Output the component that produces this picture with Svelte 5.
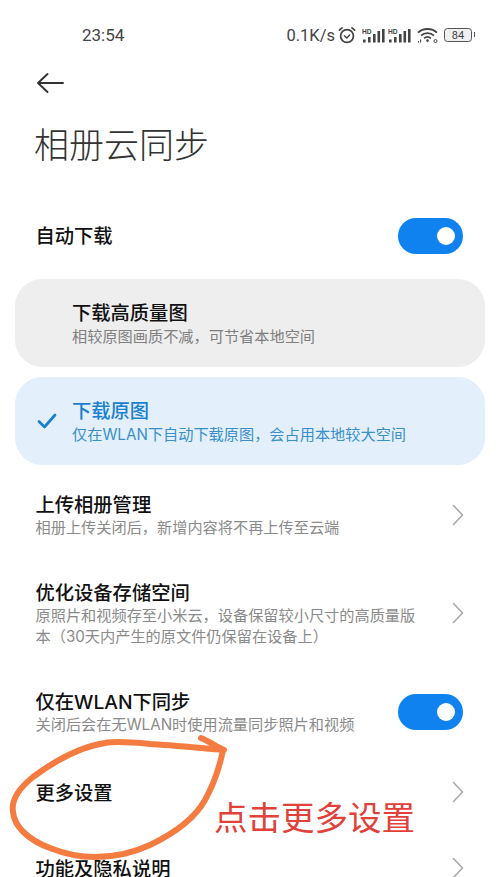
<script>
  const rows = [
    { title: '上传相册管理', sub: ['相册上传关闭后，新增内容将不再上传至云端'], kind: 'chevron' },
    { title: '优化设备存储空间', sub: ['原照片和视频存至小米云，设备保留较小尺寸的高质量版', '本（30天内产生的原文件仍保留在设备上）'], kind: 'chevron' },
    { title: '仅在WLAN下同步', sub: ['关闭后会在无WLAN时使用流量同步照片和视频'], kind: 'toggle' },
    { title: '更多设置', sub: [], kind: 'chevron', cls: 'more' },
    { title: '功能及隐私说明', sub: [], kind: 'chevron', cls: 'privacy' }
  ];
</script>

<div class="page">
  <header class="status">
    <span class="time">23:54</span>
    <div class="status-right">
      <span class="speed">0.1K/s</span>
      <svg class="alarm" width="20" height="20" viewBox="0 0 20 20" fill="none" stroke="#444" stroke-linecap="round" stroke-linejoin="round">
        <circle cx="10" cy="11" r="6.4" stroke-width="1.7"/>
        <path d="M7.4 10.8 9.8 13l2.8-3" stroke-width="1.5"/>
        <path d="M2.4 5.2 5 2.8M17.6 5.2 15 2.8" stroke-width="1.7"/>
      </svg>
      {#each [0, 1] as s}
        <svg class="signal" width="23" height="15" viewBox="0 0 23 15">
          <text x="0" y="5.6" font-size="6.6" font-weight="700" font-family="Liberation Sans" fill="#444">HD</text>
          <rect x="1" y="11.5" width="2.6" height="3" fill="#444"/>
          <rect x="6" y="9" width="2.6" height="5.5" fill="#444"/>
          <rect x="11" y="6" width="2.6" height="8.5" fill="#444"/>
          <rect x="15.5" y="3" width="2.6" height="11.5" fill="#444"/>
          <rect x="20" y="1" width="2.6" height="13.5" fill="#444"/>
        </svg>
      {/each}
      <svg class="wifi" width="21" height="16" viewBox="0 0 21 16" fill="none" stroke="#444" stroke-width="1.8">
        <path d="M1 5.6C6 .8 15 .8 20 5.6"/>
        <path d="M4 8.6C7.5 5.3 13.5 5.3 17 8.6"/>
        <path d="M7 11.4C9 9.7 12 9.7 14 11.4"/>
        <circle cx="10.5" cy="13.6" r="1.3" fill="#444" stroke="none"/>
        <path d="M1.5 15.6v-1.6M3.6 15.6v-3" stroke-width="1.1"/>
        <circle cx="18.5" cy="14" r="1.5" stroke-width="1"/>
      </svg>
      <div class="battery"><span>84</span></div>
    </div>
  </header>

  <nav class="nav">
    <svg width="28" height="22" viewBox="0 0 28 22" fill="none" stroke="#333" stroke-width="1.9" stroke-linecap="round" stroke-linejoin="round">
      <path d="M27 11H2M11.5 2 2 11l9.5 9"/>
    </svg>
  </nav>

  <h1>相册云同步</h1>

  <div class="auto">
    <span class="row-title">自动下载</span>
    <span class="toggle"><i></i></span>
  </div>

  <section class="cards">
    <div class="card">
      <div class="check-slot"></div>
      <div class="card-text">
        <div class="card-title">下载高质量图</div>
        <div class="sub">相较原图画质不减，可节省本地空间</div>
      </div>
    </div>
    <div class="card on">
      <div class="check-slot">
        <svg width="20" height="16" viewBox="0 0 20 16" fill="none" stroke="#1a80d0" stroke-width="2.8" stroke-linecap="round" stroke-linejoin="round">
          <path d="M2 8.5 7.5 14 18 2"/>
        </svg>
      </div>
      <div class="card-text">
        <div class="card-title">下载原图</div>
        <div class="sub">仅在WLAN下自动下载原图，会占用本地较大空间</div>
      </div>
    </div>
  </section>

  <section class="list">
    {#each rows as row}
      <div class="row {row.cls ?? ''}">
        <div class="row-text">
          <div class="row-title">{row.title}</div>
          {#each row.sub as line}
            <div class="sub">{line}</div>
          {/each}
        </div>
        {#if row.kind === 'toggle'}
          <span class="toggle row-toggle"><i></i></span>
        {:else}
          <svg class="chev" width="12" height="22" viewBox="0 0 12 22" fill="none" stroke="#a9a9a9" stroke-width="1.6" stroke-linecap="round" stroke-linejoin="round">
            <path d="M1.5 1.5 10.5 11l-9 9.5"/>
          </svg>
        {/if}
      </div>
    {/each}
  </section>

  <svg class="scribble" width="500" height="877" viewBox="0 0 500 877" fill="none" stroke="#f47c40" stroke-width="6" stroke-linecap="round" stroke-linejoin="round">
    <path d="M201 738C208 741 216 746 224 750C200 748 170 745 150 744C130 742 115 741 105 743C85 746 60 757 33 777C18 789 11 800 13 812C14 826 28 840 50 848C65 854 80 857 95 857C115 857 135 852 150 845C175 833 195 818 205 800C215 782 220 765 223 750"/>
  </svg>
  <div class="note">点击更多设置</div>
</div>

<style>
  :global(body) {
    margin: 0;
    background: #fff;
  }
  .page {
    position: relative;
    width: 500px;
    height: 877px;
    overflow: hidden;
    background: #fff;
    font-family: Inter, "Noto Sans CJK SC", "Noto Sans", sans-serif;
    color: #111;
  }
  .status {
    height: 70px;
    display: flex;
    align-items: center;
    justify-content: space-between;
    padding: 0 28px 0 82px;
    box-sizing: border-box;
    font-family: Roboto, "Liberation Sans", sans-serif;
    color: #444;
  }
  .time {
    font-size: 17px;
  }
  .status-right {
    display: flex;
    align-items: center;
  }
  .speed {
    font-size: 16.5px;
    margin-right: 2px;
  }
  .alarm {
    margin-right: 5px;
  }
  .signal {
    margin-right: 3px;
  }
  .wifi {
    margin: 0 6px 0 3px;
  }
  .battery {
    position: relative;
    width: 28px;
    height: 14px;
    border: 1.3px solid #555;
    border-radius: 3.5px;
    display: flex;
    align-items: center;
    justify-content: center;
    box-sizing: border-box;
    font-size: 11px;
    color: #444;
    background: #f0f0f0;
  }
  .battery::after {
    content: "";
    position: absolute;
    right: -4px;
    top: 3px;
    width: 1.5px;
    height: 5px;
    background: #555;
  }
  .nav {
    height: 26px;
    padding-left: 36px;
    display: flex;
    align-items: center;
  }
  h1 {
    margin: 27px 0 0 34px;
    font-size: 35px;
    line-height: 44px;
    font-weight: 300;
    color: #333;
  }
  .auto {
    margin-top: 51px;
    padding: 0 37px 0 35.5px;
    display: flex;
    align-items: center;
    justify-content: space-between;
  }
  .row-title {
    font-size: 19.3px;
    line-height: 24px;
    font-weight: 500;
    color: #111;
  }
  .toggle {
    flex: none;
    width: 65px;
    height: 36px;
    border-radius: 18px;
    background: #0f82f0;
    display: flex;
    align-items: center;
    justify-content: flex-end;
    padding-right: 8px;
    box-sizing: border-box;
  }
  .row-toggle {
    margin-bottom: 2px;
  }
  .toggle i {
    width: 18px;
    height: 18px;
    border-radius: 50%;
    background: #fff;
  }
  .cards {
    margin: 25px 15px 0;
    display: flex;
    flex-direction: column;
    gap: 10px;
  }
  .card {
    height: 88px;
    border-radius: 27px;
    background: #eeeeee;
    display: flex;
    align-items: center;
  }
  .card.on {
    background: #e3f0fc;
  }
  .check-slot {
    flex: none;
    width: 57px;
    padding-left: 22px;
    box-sizing: border-box;
    display: flex;
    align-items: center;
  }
  .card-text {
    padding-top: 2px;
  }
  .card-title {
    font-size: 19.3px;
    line-height: 24px;
    font-weight: 500;
    color: #111;
  }
  .on .card-title {
    color: #1a80d0;
  }
  .sub {
    font-size: 15.2px;
    line-height: 21px;
    color: #8a8a8a;
  }
  .card .sub {
    color: #7f7f7f;
    line-height: 23px;
  }
  .on .sub {
    color: #3a8fc9;
  }
  .list {
    margin-top: 28px;
    padding: 0 37px 0 35.5px;
    display: flex;
    flex-direction: column;
    gap: 43px;
  }
  .row {
    display: flex;
    align-items: center;
    justify-content: space-between;
  }
  .row-text {
    min-width: 0;
  }
  .row.more {
    margin-top: 3px;
  }
  .row.privacy {
    margin-top: 9px;
  }
  .chev {
    flex: none;
    margin: 0 -1px 2px 0;
  }
  .scribble {
    position: absolute;
    left: 0;
    top: 0;
    pointer-events: none;
  }
  .note {
    position: absolute;
    left: 214px;
    top: 796px;
    font-size: 33.5px;
    line-height: 44px;
    color: #e2403a;
    white-space: nowrap;
  }
</style>
